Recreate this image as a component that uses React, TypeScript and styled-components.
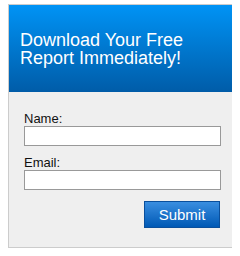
import React from "react";
import styled, { createGlobalStyle } from "styled-components";

const GlobalStyle = createGlobalStyle`
  body {
    margin: 4px 8px;
    background: #ffffff;
    font-family: "Liberation Sans", Arial, sans-serif;
  }
`;

const OptinBox = styled.div`
  width: 225px;
  height: 242px;
  border: 1px solid #cccccc;
  background: #efefef;
  display: flex;
  flex-direction: column;
`;

const Header = styled.div`
  height: 87px;
  display: flex;
  align-items: center;
  padding-left: 11px;
  background: linear-gradient(to bottom, #0093f5 0%, #005ca8 100%);
  color: #ffffff;
  font-size: 18px;
  line-height: 18px;
`;

const Form = styled.form`
  display: flex;
  flex-direction: column;
  padding: 19px 12px 0 15px;
`;

const Label = styled.label`
  display: block;
  font-size: 13px;
  line-height: 15px;
  color: #111111;
`;

const Field = styled.input`
  display: block;
  box-sizing: border-box;
  width: 197px;
  height: 20px;
  margin: 0 0 9px 0;
  border: 1px solid #999999;
  background: #ffffff;
  padding: 0 3px;
`;

const Actions = styled.div`
  display: flex;
  justify-content: flex-end;
  width: 197px;
  padding-top: 2px;
`;

const SubmitButton = styled.button`
  box-sizing: border-box;
  width: 76px;
  height: 27px;
  margin-right: 1px;
  border: 1px solid #0a4f9c;
  background: linear-gradient(to bottom, #3a8ee0 0%, #0059b5 100%);
  color: #ffffff;
  font-family: "Liberation Sans", Arial, sans-serif;
  font-size: 15px;
  padding: 0;
`;

export default function App() {
  return (
    <>
      <GlobalStyle />
      <OptinBox>
        <Header>
          Download Your Free
          <br />
          Report Immediately!
        </Header>
        <Form onSubmit={(e) => e.preventDefault()}>
          <Label>Name:</Label>
          <Field type="text" />
          <Label>Email:</Label>
          <Field type="text" />
          <Actions>
            <SubmitButton type="submit">Submit</SubmitButton>
          </Actions>
        </Form>
      </OptinBox>
    </>
  );
}
